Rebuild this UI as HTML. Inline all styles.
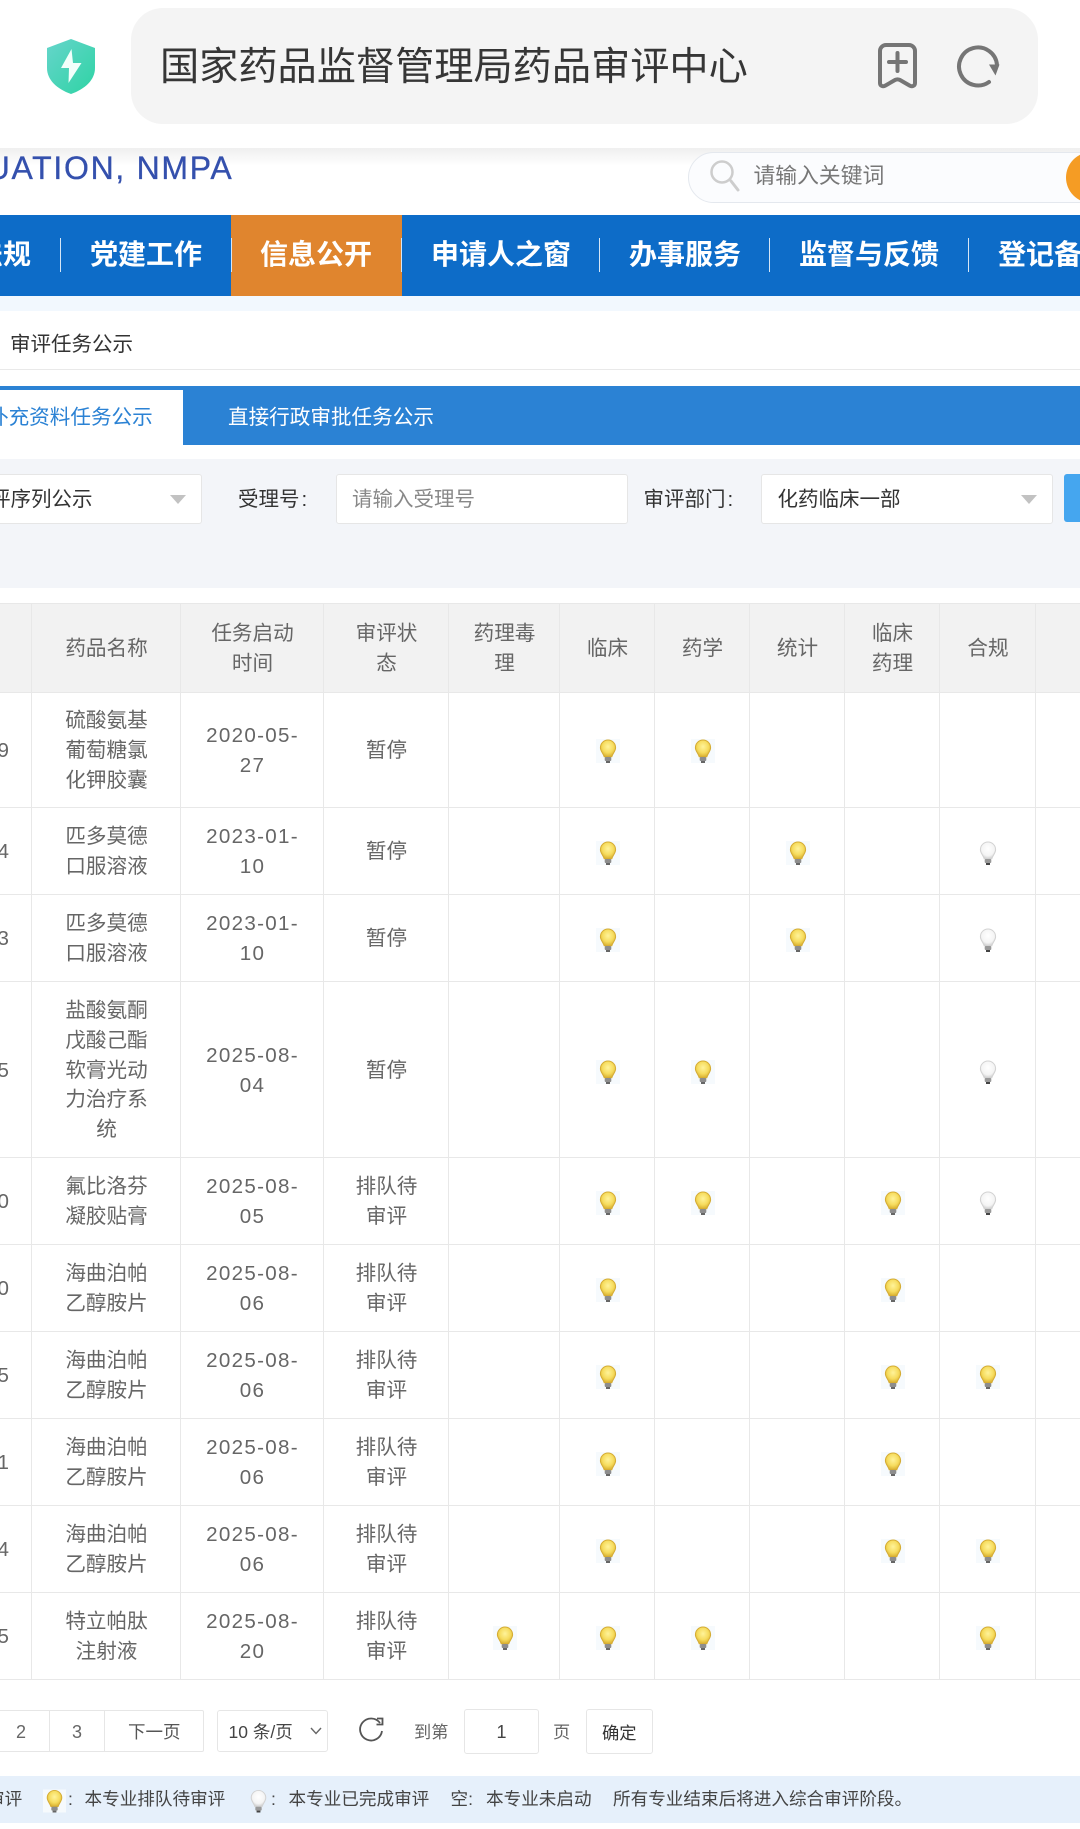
<!DOCTYPE html>
<html lang="zh-CN"><head><meta charset="utf-8"><title>审评任务公示</title>
<style>
*{box-sizing:border-box;margin:0;padding:0}
html,body{width:1080px;height:1829px;overflow:hidden;background:#fff}
body{position:relative;font-family:"Liberation Sans","Noto Sans CJK SC",sans-serif;color:#333}
.a{position:absolute}
.t{position:absolute;white-space:nowrap}
.nav{font-size:28px;font-weight:700;color:#fff;line-height:40px;top:235px}
.sep{position:absolute;top:238px;width:1px;height:34px;background:#d5e6f6}
.box{position:absolute;background:#fff;border:1px solid #e6e6e6;border-radius:3px}
.f{font-size:20.5px;line-height:30px}
.arr{position:absolute;width:0;height:0;border-left:8.5px solid transparent;border-right:8.5px solid transparent;border-top:9px solid #c2c2c2}
table{position:absolute;left:-100px;top:603px;width:1280px;border-collapse:collapse;table-layout:fixed;font-size:20.6px;line-height:29.7px;color:#666;text-align:center}
td,th{border-top:1px solid #e8e8e8;border-bottom:1px solid #e8e8e8;font-weight:400;padding:2px 0 0;vertical-align:middle;overflow:hidden}
thead tr{height:89px;background:#f2f2f2}
th{color:#666}
tbody tr{height:87px}
td.n{text-align:right;padding-right:23px}
td svg{display:block;margin:2px auto 0}
tr.r1 td svg{margin-top:0}
.d{letter-spacing:1.3px}
.v{position:absolute;top:603px;width:1px;height:1077px;background:#e8e8e8}
.p{font-size:17.5px;line-height:26px;color:#666}
.l{font-size:17.6px;line-height:26px;color:#444;top:1786px}
</style></head><body>
<svg width="0" height="0" style="position:absolute"><defs>
<radialGradient id="gy" cx=".5" cy=".4" r=".6"><stop offset="0" stop-color="#fff39a"/><stop offset=".6" stop-color="#f6dc5e"/><stop offset="1" stop-color="#d9b030"/></radialGradient>
<radialGradient id="gw" cx=".5" cy=".4" r=".6"><stop offset="0" stop-color="#fff"/><stop offset=".7" stop-color="#f4f4f4"/><stop offset="1" stop-color="#cfcfcf"/></radialGradient>
<symbol id="by" viewBox="0 0 24 24"><rect width="24" height="24" fill="#f6fafd"/><path d="M12 1a7.6 7.6 0 0 0-7.6 7.8c0 3.4 2.8 5.4 3.8 9h7.600c1-3.600 3.800-5.600 3.800-9A7.600 7.600 0 0 0 12 1z" fill="url(#gy)" stroke="#d5ac34" stroke-width="1"/><rect x="8.700" y="18" width="6.600" height="4" rx="1" fill="#8d8d8d"/><rect x="10" y="22" width="4" height="2" fill="#666"/></symbol>
<symbol id="bw" viewBox="0 0 24 24"><path d="M12 1a7.600 7.600 0 0 0-7.600 7.800c0 3.400 2.800 5.400 3.800 9h7.600c1-3.600 3.800-5.600 3.800-9A7.600 7.600 0 0 0 12 1z" fill="url(#gw)" stroke="#d2d2d2" stroke-width="1"/><rect x="8.700" y="18" width="6.600" height="4" rx="1" fill="#999"/><rect x="10" y="22" width="4" height="2" fill="#444"/></symbol>
<linearGradient id="sh" x1="0" y1="0" x2="1" y2="1"><stop offset="0" stop-color="#66d5cb"/><stop offset="1" stop-color="#2ed3a4"/></linearGradient>
</defs></svg>

<!-- page below browser bar -->
<div class="a" style="left:0;top:148px;width:1080px;height:18px;background:linear-gradient(#efefef,#fff)"></div>
<div class="t" style="left:-13.300px;top:149px;font-size:32px;line-height:38px;letter-spacing:1.700px;color:#3450ad;-webkit-text-stroke:.3px #3450ad">UATION, NMPA</div>
<div class="a" style="left:688px;top:152px;width:420px;height:51px;border:1px solid #e4e8ee;border-radius:26px;background:#fbfcfe"></div>
<svg class="a" style="left:708px;top:160px" width="34" height="34" viewBox="0 0 34 34"><circle cx="14" cy="12" r="10.500" fill="none" stroke="#cdcdcd" stroke-width="2.500"/><path d="M23 21l7 9" stroke="#cdcdcd" stroke-width="3" stroke-linecap="round"/></svg>
<div class="t" style="left:753.500px;top:160px;font-size:21.800px;line-height:32px;color:#777">请输入关键词</div>
<div class="a" style="left:1066px;top:152px;width:60px;height:51px;border-radius:26px;background:#f59c24"></div>

<!-- nav -->
<div class="a" style="left:0;top:215px;width:1080px;height:81px;background:#0d6cc8"></div>
<div class="a" style="left:0;top:296px;width:1080px;height:15px;background:#f2f8fe"></div>
<div class="a" style="left:231px;top:214.500px;width:171px;height:81.500px;background:#e0852e"></div>
<div class="t nav" style="left:-25px">法规</div>
<div class="sep" style="left:60px"></div>
<div class="t nav" style="left:90px">党建工作</div>
<div class="sep" style="left:231px"></div>
<div class="t nav" style="left:260px;color:#fff">信息公开</div>
<div class="sep" style="left:401px"></div>
<div class="t nav" style="left:431px">申请人之窗</div>
<div class="sep" style="left:599px"></div>
<div class="t nav" style="left:629px">办事服务</div>
<div class="sep" style="left:769px"></div>
<div class="t nav" style="left:799px">监督与反馈</div>
<div class="sep" style="left:968px"></div>
<div class="t nav" style="left:998px">登记备案</div>

<!-- breadcrumb -->
<div class="t" style="left:10px;top:330px;font-size:20.500px;line-height:30px;color:#333">审评任务公示</div>
<div class="a" style="left:0;top:369px;width:1080px;height:1px;background:#e9e9e9"></div>

<!-- tabs -->
<div class="a" style="left:0;top:386px;width:1080px;height:59px;background:#2b82d4"></div>
<div class="a" style="left:0;top:390px;width:183px;height:55px;background:#fff"></div>
<div class="t f" style="left:-12px;top:403px;color:#2b82d4;font-size:20.600px">补充资料任务公示</div>
<div class="t f" style="left:228px;top:403px;color:#fff;font-size:20.600px">直接行政审批任务公示</div>

<!-- filter -->
<div class="a" style="left:0;top:459px;width:1080px;height:129px;background:#f3f5f9"></div>
<div class="box" style="left:-20px;top:474px;width:222px;height:50px"></div>
<div class="t f" style="left:-10px;top:485px;color:#333">评序列公示</div>
<div class="arr" style="left:170px;top:495px"></div>
<div class="t f" style="left:238px;top:485px;color:#333">受理号<span style="margin-left:2px">:</span></div>
<div class="box" style="left:336px;top:474px;width:292px;height:50px"></div>
<div class="t f" style="left:352px;top:485px;color:#888">请输入受理号</div>
<div class="t f" style="left:643.500px;top:485px;color:#333">审评部门<span style="margin-left:2px">:</span></div>
<div class="box" style="left:761px;top:474px;width:292px;height:50px"></div>
<div class="t f" style="left:777.500px;top:485px;color:#333">化药临床一部</div>
<div class="arr" style="left:1021px;top:495px"></div>
<div class="a" style="left:1064px;top:474px;width:30px;height:48px;background:#45a6ef;border-radius:3px"></div>

<!-- table -->
<table>
<colgroup><col style="width:132px"><col style="width:149px"><col style="width:143px"><col style="width:125px"><col style="width:111px"><col style="width:95px"><col style="width:95px"><col style="width:95px"><col style="width:95px"><col style="width:96px"><col></colgroup>
<thead><tr><th></th><th>药品名称</th><th>任务启动<br>时间</th><th>审评状<br>态</th><th>药理毒<br>理</th><th>临床</th><th>药学</th><th>统计</th><th>临床<br>药理</th><th>合规</th><th></th></tr></thead>
<tbody>
<tr class="r1" style="height:115px"><td class="n">9</td><td>硫酸氨基<br>葡萄糖氯<br>化钾胶囊</td><td class="d">2020-05-<br>27</td><td>暂停</td><td></td><td><svg width="24" height="24"><use href="#by"/></svg></td><td><svg width="24" height="24"><use href="#by"/></svg></td><td></td><td></td><td></td><td></td></tr>
<tr><td class="n">4</td><td>匹多莫德<br>口服溶液</td><td class="d">2023-01-<br>10</td><td>暂停</td><td></td><td><svg width="24" height="24"><use href="#by"/></svg></td><td></td><td><svg width="24" height="24"><use href="#by"/></svg></td><td></td><td><svg width="24" height="24"><use href="#bw"/></svg></td><td></td></tr>
<tr><td class="n">3</td><td>匹多莫德<br>口服溶液</td><td class="d">2023-01-<br>10</td><td>暂停</td><td></td><td><svg width="24" height="24"><use href="#by"/></svg></td><td></td><td><svg width="24" height="24"><use href="#by"/></svg></td><td></td><td><svg width="24" height="24"><use href="#bw"/></svg></td><td></td></tr>
<tr style="height:176px"><td class="n">5</td><td>盐酸氨酮<br>戊酸己酯<br>软膏光动<br>力治疗系<br>统</td><td class="d">2025-08-<br>04</td><td>暂停</td><td></td><td><svg width="24" height="24"><use href="#by"/></svg></td><td><svg width="24" height="24"><use href="#by"/></svg></td><td></td><td></td><td><svg width="24" height="24"><use href="#bw"/></svg></td><td></td></tr>
<tr><td class="n">0</td><td>氟比洛芬<br>凝胶贴膏</td><td class="d">2025-08-<br>05</td><td>排队待<br>审评</td><td></td><td><svg width="24" height="24"><use href="#by"/></svg></td><td><svg width="24" height="24"><use href="#by"/></svg></td><td></td><td><svg width="24" height="24"><use href="#by"/></svg></td><td><svg width="24" height="24"><use href="#bw"/></svg></td><td></td></tr>
<tr><td class="n">0</td><td>海曲泊帕<br>乙醇胺片</td><td class="d">2025-08-<br>06</td><td>排队待<br>审评</td><td></td><td><svg width="24" height="24"><use href="#by"/></svg></td><td></td><td></td><td><svg width="24" height="24"><use href="#by"/></svg></td><td></td><td></td></tr>
<tr><td class="n">5</td><td>海曲泊帕<br>乙醇胺片</td><td class="d">2025-08-<br>06</td><td>排队待<br>审评</td><td></td><td><svg width="24" height="24"><use href="#by"/></svg></td><td></td><td></td><td><svg width="24" height="24"><use href="#by"/></svg></td><td><svg width="24" height="24"><use href="#by"/></svg></td><td></td></tr>
<tr><td class="n">1</td><td>海曲泊帕<br>乙醇胺片</td><td class="d">2025-08-<br>06</td><td>排队待<br>审评</td><td></td><td><svg width="24" height="24"><use href="#by"/></svg></td><td></td><td></td><td><svg width="24" height="24"><use href="#by"/></svg></td><td></td><td></td></tr>
<tr><td class="n">4</td><td>海曲泊帕<br>乙醇胺片</td><td class="d">2025-08-<br>06</td><td>排队待<br>审评</td><td></td><td><svg width="24" height="24"><use href="#by"/></svg></td><td></td><td></td><td><svg width="24" height="24"><use href="#by"/></svg></td><td><svg width="24" height="24"><use href="#by"/></svg></td><td></td></tr>
<tr><td class="n">5</td><td>特立帕肽<br>注射液</td><td class="d">2025-08-<br>20</td><td>排队待<br>审评</td><td><svg width="24" height="24"><use href="#by"/></svg></td><td><svg width="24" height="24"><use href="#by"/></svg></td><td><svg width="24" height="24"><use href="#by"/></svg></td><td></td><td></td><td><svg width="24" height="24"><use href="#by"/></svg></td><td></td></tr>
</tbody></table>
<div class="v" style="left:31px"></div>
<div class="v" style="left:180px"></div>
<div class="v" style="left:323px"></div>
<div class="v" style="left:448px"></div>
<div class="v" style="left:559px"></div>
<div class="v" style="left:654px"></div>
<div class="v" style="left:749px"></div>
<div class="v" style="left:844px"></div>
<div class="v" style="left:939px"></div>
<div class="v" style="left:1035px"></div>

<!-- pagination -->
<div class="box" style="left:-20px;top:1710px;width:70px;height:42px;border-radius:0"></div>
<div class="box" style="left:49px;top:1710px;width:56px;height:42px;border-radius:0"></div>
<div class="box" style="left:104px;top:1710px;width:100px;height:42px;border-radius:0 2px 2px 0"></div>
<div class="t p" style="left:16px;top:1719px;font-size:18px">2</div>
<div class="t p" style="left:72px;top:1719px;font-size:18px">3</div>
<div class="t p" style="left:128px;top:1719px;color:#555">下一页</div>
<div class="box" style="left:217px;top:1710px;width:111px;height:42px"></div>
<div class="t p" style="left:228.500px;top:1719px;color:#444">10 条/页</div>
<svg class="a" style="left:309px;top:1726px" width="14" height="10" viewBox="0 0 14 10"><path d="M2 2l5 5.500L12 2" fill="none" stroke="#666" stroke-width="1.400"/></svg>
<svg class="a" style="left:358px;top:1716px" width="26" height="28" viewBox="0 0 26 28"><path d="M22 7A11 11 0 1 0 24 15" fill="none" stroke="#555" stroke-width="1.800"/><path d="M19 2.500h5.500v6h-6" fill="none" stroke="#555" stroke-width="1.800"/></svg>
<div class="t p" style="left:414px;top:1719px;font-size:17.200px">到第</div>
<div class="box" style="left:464px;top:1709px;width:75px;height:45px"></div>
<div class="t p" style="left:496.500px;top:1719px;font-size:18px;color:#444">1</div>
<div class="t p" style="left:553px;top:1719px;font-size:17.200px">页</div>
<div class="box" style="left:586px;top:1709px;width:67px;height:45px"></div>
<div class="t p" style="left:602px;top:1720px;font-size:17.300px;color:#333">确定</div>

<!-- legend -->
<div class="a" style="left:0;top:1776px;width:1080px;height:47px;background:#e6f0fb"></div>
<div class="t l" style="left:-13px">审评</div>
<svg class="a" style="left:43px;top:1789px" width="23" height="24"><use href="#by"/></svg>
<div class="t l" style="left:68px">:</div>
<div class="t l" style="left:84.500px">本专业排队待审评</div>
<svg class="a" style="left:247px;top:1789px" width="23" height="24"><use href="#bw"/></svg>
<div class="t l" style="left:271px">:</div>
<div class="t l" style="left:288.500px">本专业已完成审评</div>
<div class="t l" style="left:450.500px">空:</div>
<div class="t l" style="left:486px">本专业未启动</div>
<div class="t l" style="left:613px">所有专业结束后将进入综合审评阶段。</div>

<!-- browser bar -->
<div class="a" style="left:0;top:0;width:1080px;height:148px;background:#fff"></div>
<svg class="a" style="left:0;top:0" width="130" height="120" viewBox="0 0 130 120"><path d="M71 39L95 48V68C95 80 85 89 71 94C57 89 47 80 47 68V48Z" fill="url(#sh)"/><path d="M71.500 49L61 68H69L68.500 83L81.500 63H73Z" fill="#f2fffb"/></svg>
<div class="a" style="left:131px;top:8px;width:907px;height:116px;background:#f4f4f4;border-radius:32px"></div>
<div class="t" style="left:160px;top:42px;font-size:39.200px;line-height:52px;color:#363636">国家药品监督管理局药品审评中心</div>
<svg class="a" style="left:870px;top:36px" width="140" height="60" viewBox="870 36 140 60"><path d="M886 45H909a6 6 0 0 1 6 6V83c0 3-3 4-5.500 2.500L900 80a6 6 0 0 0-5 0L885.500 85.500C883 87 880 86 880 83V51a6 6 0 0 1 6-6z" fill="none" stroke="#757575" stroke-width="4" stroke-linejoin="round"/><path d="M889 62H906M897.500 53V71" stroke="#757575" stroke-width="4" stroke-linecap="round"/><path d="M997 65A19 19 0 1 0 989 82" fill="none" stroke="#757575" stroke-width="4" stroke-linecap="round"/><path d="M989 64.500H999.500L995.500 75.500Z" fill="#757575"/></svg>
</body></html>
